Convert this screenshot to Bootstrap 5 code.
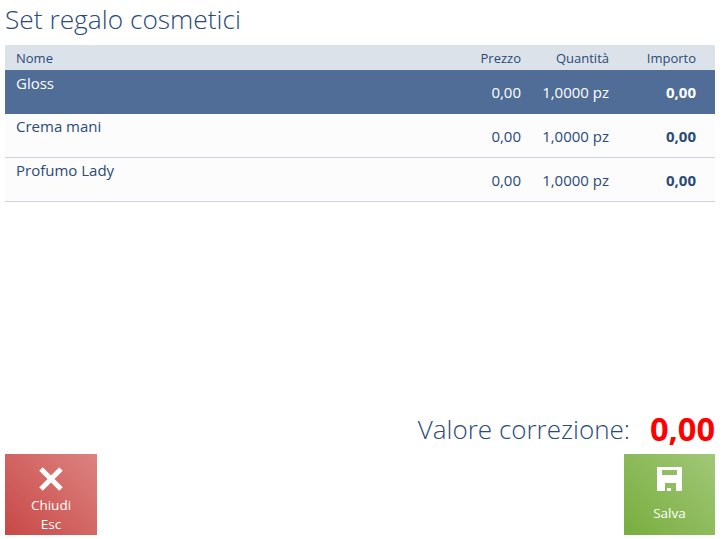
<!DOCTYPE html>
<html lang="en">

<head>
    <meta charset="UTF-8">
    <meta name="viewport" content="width=device-width, initial-scale=1.0">
    <title>Set regalo cosmetici</title>
    <link href="https://cdn.jsdelivr.net/npm/bootstrap@5.3.0/dist/css/bootstrap.min.css" rel="stylesheet">
    <style>
        html,
        body {
            height: 100%;
        }

        body {
            background-color: #fff;
            color: #2b4a78;
            font-family: "Open Sans", "Noto Sans", sans-serif;
            overflow: hidden;
        }

        .page-wrap {
            height: 539px;
            padding: 0 8px 4px 5px;
        }

        .page-title {
            height: 45px;
            margin: 0;
            font-size: 26.3px;
            font-weight: 300;
            line-height: 38px;
        }

        .head-row,
        .doc-row {
            display: grid;
            grid-template-columns: 1fr 70px 88px 106px;
        }

        .head-row {
            height: 25px;
            background-color: #dce2ea;
            font-size: 13px;
            line-height: 26px;
        }

        .head-row div:first-child {
            padding-left: 11px;
        }

        .head-row div:not(:first-child),
        .doc-row div:not(:first-child) {
            text-align: right;
        }

        .head-row div:last-child,
        .doc-row div:last-child {
            padding-right: 19px;
        }

        .doc-row {
            height: 44px;
            background-color: #fcfcfc;
            border-bottom: 1px solid #cdd3dc;
            font-size: 15px;
        }

        .doc-row.picked {
            background-color: #4f6d96;
            border-bottom: 0;
            color: #fff;
        }

        .doc-row .item-name {
            padding-left: 11px;
            line-height: 25px;
        }

        .doc-row.picked .item-name {
            line-height: 27px;
        }

        .doc-row .item-num {
            line-height: 45px;
        }

        .doc-row div:last-child {
            font-weight: 700;
        }

        .total-label {
            font-size: 26px;
            font-weight: 300;
            line-height: 36px;
        }

        .total-value {
            color: #f00;
            font-size: 32.5px;
            font-weight: 700;
            line-height: 36px;
            margin-left: 20px;
        }

        .total-line {
            margin-bottom: 7px;
        }

        .act-btn {
            width: 92px;
            height: 81px;
            color: #fff;
            font-size: 13.5px;
            line-height: 19px;
            border: 0;
            border-radius: 0;
            padding: 0;
        }

        .act-close {
            background: linear-gradient(45deg, #c74846, #dd8380);
            padding-top: 12px;
        }

        .act-save {
            width: 91px;
            background: linear-gradient(45deg, #78ad3e, #a2c878);
            padding-top: 13px;
        }

        .act-close svg {
            margin-bottom: 4px;
        }

        .act-save svg {
            margin-bottom: 13px;
        }
    </style>
</head>

<body>
    <div class="page-wrap d-flex flex-column">
        <h1 class="page-title">Set regalo cosmetici</h1>

        <div class="head-row">
            <div>Nome</div>
            <div>Prezzo</div>
            <div>Quantità</div>
            <div>Importo</div>
        </div>
        <div class="doc-row picked">
            <div class="item-name">Gloss</div>
            <div class="item-num">0,00</div>
            <div class="item-num">1,0000 pz</div>
            <div class="item-num">0,00</div>
        </div>
        <div class="doc-row">
            <div class="item-name">Crema mani</div>
            <div class="item-num">0,00</div>
            <div class="item-num">1,0000 pz</div>
            <div class="item-num">0,00</div>
        </div>
        <div class="doc-row">
            <div class="item-name">Profumo Lady</div>
            <div class="item-num">0,00</div>
            <div class="item-num">1,0000 pz</div>
            <div class="item-num">0,00</div>
        </div>

        <div class="total-line d-flex justify-content-end align-items-center mt-auto">
            <span class="total-label">Valore correzione:</span>
            <span class="total-value">0,00</span>
        </div>

        <div class="d-flex justify-content-between">
            <button type="button" class="btn act-btn act-close d-flex flex-column align-items-center">
                <svg width="26" height="26" viewBox="0 0 26 26">
                    <path d="M3 3 L23 23 M23 3 L3 23" stroke="#fff" stroke-width="5" fill="none" />
                </svg>
                <span>Chiudi</span>
                <span>Esc</span>
            </button>
            <button type="button" class="btn act-btn act-save d-flex flex-column align-items-center">
                <svg width="25" height="24" viewBox="0 0 25 24">
                    <path fill="#fff" fill-rule="evenodd" d="M0 0 H25 V24 H19 V16 H8 V24 H0 Z M5 3 V8 H20 V3 Z M10 21 H14 V24 H10 Z" />
                </svg>
                <span>Salva</span>
            </button>
        </div>
    </div>

    <script src="https://cdn.jsdelivr.net/npm/bootstrap@5.3.0/dist/js/bootstrap.bundle.min.js"></script>
</body>

</html>
